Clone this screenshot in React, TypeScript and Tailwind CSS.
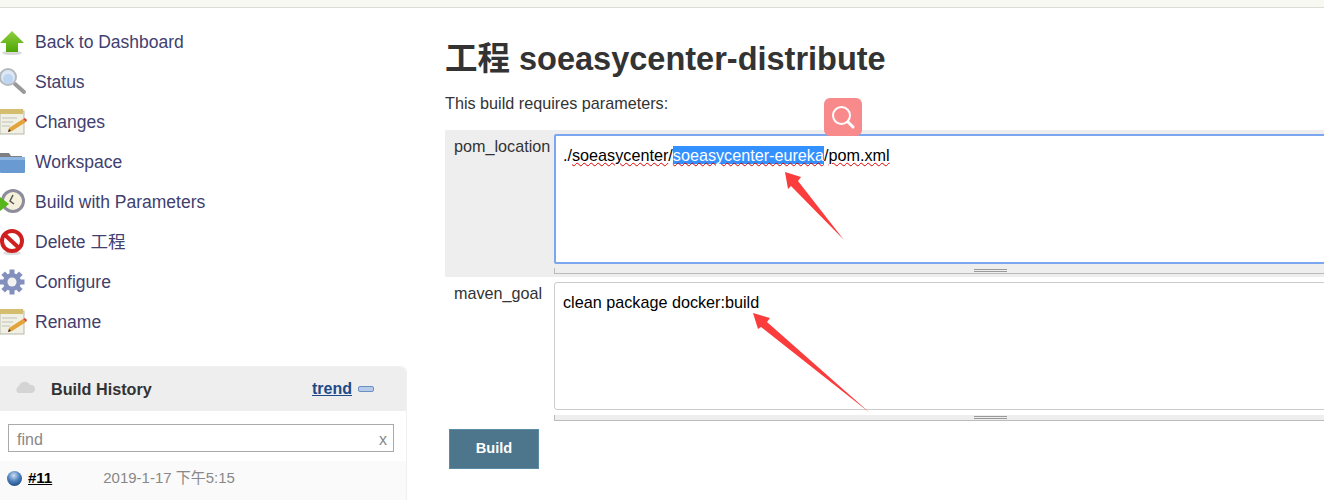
import React from "react";

const font = { fontFamily: '"Liberation Sans", "Noto Sans CJK SC", Arial, sans-serif' };

const ArrowUp = () => (
  <svg width="28" height="28" viewBox="0 0 28 28">
    <defs>
      <linearGradient id="ga" x1="0" y1="0" x2="0" y2="1">
        <stop offset="0" stopColor="#8fcf3e" />
        <stop offset="1" stopColor="#4da606" />
      </linearGradient>
    </defs>
    <ellipse cx="12" cy="25" rx="10" ry="2" fill="#d8d8d8" />
    <path d="M12 3 L24 15 H18 V24 H6 V15 H0 Z" fill="url(#ga)" />
  </svg>
);
const Magnifier = () => (
  <svg width="28" height="28" viewBox="0 0 28 28">
    <path d="M15 16 L24 24" stroke="#999" strokeWidth="4" strokeLinecap="round" />
    <circle cx="8" cy="9" r="8" fill="#dce8f5" stroke="#b5b8bd" strokeWidth="2" />
    <circle cx="8" cy="11" r="5" fill="#a8c8ee" opacity="0.6" />
  </svg>
);
const Notepad = () => (
  <svg width="28" height="28" viewBox="0 0 28 28">
    <rect x="0" y="3" width="24" height="23" fill="#f1f0e4" stroke="#b9b9ad" />
    <rect x="0" y="1" width="23" height="5" fill="#d4bd6f" />
    <path d="M2 10 H17 M2 14 H13 M2 18 H10" stroke="#cfcfc6" strokeWidth="1.5" />
    <path d="M9 20 L23 11 L26 14 L12 23 L8 24 Z" fill="#e3a23a" />
    <path d="M23 11 L26 14 L27 12 L25 10 Z" fill="#d9453a" />
    <path d="M8 24 L9 21 L11 23 Z" fill="#333" />
  </svg>
);
const Folder = () => (
  <svg width="28" height="28" viewBox="0 0 28 28">
    <path d="M0 5 H9 L11 8 H22 V24 H0 Z" fill="#7d7f83" />
    <rect x="0" y="9" width="25" height="16" rx="1" fill="#699bd2" />
    <rect x="0" y="9" width="25" height="3" fill="#8eb6e2" />
  </svg>
);
const BuildClock = () => (
  <svg width="28" height="28" viewBox="0 0 28 28">
    <circle cx="13" cy="13" r="12" fill="#8c8c9c" />
    <circle cx="13" cy="13" r="9" fill="#f4f0dc" />
    <path d="M13 7 L10 13 L14 16" stroke="#555" strokeWidth="1.5" fill="none" />
    <path d="M0 9 L9 16 L0 23 Z" fill="#58b61a" />
  </svg>
);
const NoEntry = () => (
  <svg width="28" height="28" viewBox="0 0 28 28">
    <ellipse cx="12" cy="25" rx="9" ry="2" fill="#dcdcdc" />
    <circle cx="12" cy="13" r="10" fill="#fff" stroke="#d01f1f" strokeWidth="4" />
    <path d="M5 7 L19 20" stroke="#d01f1f" strokeWidth="4" />
  </svg>
);
const Gear = () => (
  <svg width="28" height="28" viewBox="0 0 28 28">
    <g fill="#8390bd">
      <circle cx="12" cy="14" r="9" />
      {[0, 45, 90, 135, 180, 225, 270, 315].map((a) => (
        <rect key={a} x="9.5" y="1.5" width="5" height="6" transform={`rotate(${a} 12 14)`} />
      ))}
    </g>
    <circle cx="12" cy="14" r="4.5" fill="#f2f2f2" />
  </svg>
);

const items: [string, React.ReactNode][] = [
  ["Back to Dashboard", <ArrowUp />],
  ["Status", <Magnifier />],
  ["Changes", <Notepad />],
  ["Workspace", <Folder />],
  ["Build with Parameters", <BuildClock />],
  ["Delete 工程", <NoEntry />],
  ["Configure", <Gear />],
  ["Rename", <Notepad />],
];

const Grippie = () => (
  <div className="flex h-[6px] items-start justify-center border-l border-b border-[#bbb] bg-[#eee] pt-[1px] pr-[1px]">
    <div className="ml-[102px] h-[3px] w-[33px] shrink-0 border-y border-[#999]" />
  </div>
);

export default function App() {
  return (
    <div className="relative h-[503px] w-[1324px] overflow-hidden bg-white" style={font}>
      <div className="h-[8px] border-b border-[#dcdcd6] bg-[#f7f8f2]" />
      <div className="flex">
        <aside className="w-[407px] shrink-0">
          <nav className="flex flex-col pt-[14px] text-[17.5px] leading-[40px] text-[#41406f]">
            {items.map(([label, icon]) => (
              <div key={label} className="flex h-[40px] items-center">
                <span className="flex w-[35px] shrink-0 items-center">{icon}</span>
                <span>{label}</span>
              </div>
            ))}
          </nav>
          <section className="mt-[24px] rounded-tr-[6px] border-t border-r border-[#f0f0f0]">
            <div className="flex h-[44px] items-center rounded-tr-[6px] bg-[#eee] pl-[15px] pr-[32px]">
              <svg className="mb-[4px]" width="20" height="14" viewBox="0 0 20 14">
                <path d="M3 13 A4 4 0 0 1 4 6 A6 6 0 0 1 15 5 A4 4 0 0 1 17 13 Z" fill="#d4d4d4" />
              </svg>
              <span className="ml-[16px] text-[16.2px] font-bold text-[#333]">Build History</span>
              <a className="ml-auto text-[16px] font-bold text-[#204a87] underline">trend</a>
              <span className="ml-[6px] h-[6px] w-[16px] rounded-[2px] border border-[#6d8fc4] bg-[#b5cbe8]" />
            </div>
            <div className="pl-[8px] pr-[12px] pt-[13px] pb-[9px]">
              <div className="flex h-[28px] items-center justify-between border border-[#aaa] pt-[3px] pl-[8px] pr-[6px] text-[16px] text-[#888]">
                <span>find</span>
                <span>x</span>
              </div>
            </div>
            <div className="flex h-[39px] items-center bg-[#fafafa] pb-[5px] pl-[6px] text-[15px]">
              <svg width="17" height="17" viewBox="0 0 17 17">
                <defs>
                  <radialGradient id="ball" cx="0.45" cy="0.3" r="0.7">
                    <stop offset="0" stopColor="#cfe0f2" />
                    <stop offset="0.55" stopColor="#4f81bd" />
                    <stop offset="1" stopColor="#1f4f8a" />
                  </radialGradient>
                </defs>
                <circle cx="8.5" cy="8.5" r="7.5" fill="url(#ball)" />
              </svg>
              <a className="ml-[5px] font-bold text-black underline">#11</a>
              <span className="ml-[51px] text-[#888]">2019-1-17 下午5:15</span>
            </div>
          </section>
        </aside>

        <main className="min-w-0 flex-1 pl-[38px]">
          <h1 className="mt-[27px] whitespace-nowrap text-[32.5px] leading-[48px] font-bold text-[#333]">
            工程 soeasycenter-distribute
          </h1>
          <p className="mt-[11px] text-[16.2px] leading-[18px] text-[#333]">This build requires parameters:</p>
          <div className="mt-[18px] flex h-[147px] bg-[#eee]">
            <div className="w-[109px] shrink-0 pt-[6px] pl-[9px] text-[16.2px] leading-[20px] text-[#333]">pom_location</div>
            <div className="min-w-0 flex-1 pt-[4px]">
              <div className="-mr-[4px] h-[130px] rounded-[2px] border-2 border-[#7aa7f0] bg-white pl-[7px] pt-[9px] text-[16.2px] leading-[20px] whitespace-nowrap text-black">
                ./<span className="underline decoration-[#e00000] decoration-wavy decoration-1">soeasycenter</span>/
                <span className="bg-[#3390ff] text-white underline decoration-[#e00000] decoration-wavy decoration-1">soeasycenter-eureka</span>/
                <span className="underline decoration-[#e00000] decoration-wavy decoration-1">pom.xml</span>
              </div>
              <div className="mt-[4px]"><Grippie /></div>
            </div>
          </div>
          <div className="flex">
            <div className="w-[109px] shrink-0 pt-[6px] pl-[9px] text-[16.2px] leading-[20px] text-[#333]">maven_goal</div>
            <div className="min-w-0 flex-1 pt-[5px]">
              <div className="-mr-[4px] h-[128px] rounded-[3px] border border-[#ccc] bg-white pl-[8px] pt-[9px] text-[16.2px] leading-[20px] text-black">
                clean package docker:build
              </div>
              <div className="mt-[5px]"><Grippie /></div>
            </div>
          </div>
          <button className="mt-[8px] ml-[4px] h-[40px] w-[90px] border border-[#5a8ba5] bg-[#4d758c] text-[14.6px] font-bold text-white">
            Build
          </button>
        </main>
      </div>

      <div className="absolute left-[824px] top-[98px] flex h-[38px] w-[38px] items-center justify-center rounded-[6px] bg-[#f98a8c]">
        <svg width="26" height="26" viewBox="0 0 26 26" fill="none" stroke="#fff" strokeWidth="2">
          <circle cx="11.5" cy="11.5" r="8.5" />
          <path d="M18 18 L23 23" strokeWidth="3" strokeLinecap="round" />
        </svg>
      </div>

      <svg className="pointer-events-none absolute left-0 top-0" width="1324" height="503" viewBox="0 0 1324 503">
        <polygon points="785,172 801,177 798,181 844,240 791,186 788,189" fill="#fb3c3c" />
        <polygon points="753,313 770,318 767,322 870,413 761,327 758,329" fill="#fb3c3c" />
      </svg>
    </div>
  );
}
